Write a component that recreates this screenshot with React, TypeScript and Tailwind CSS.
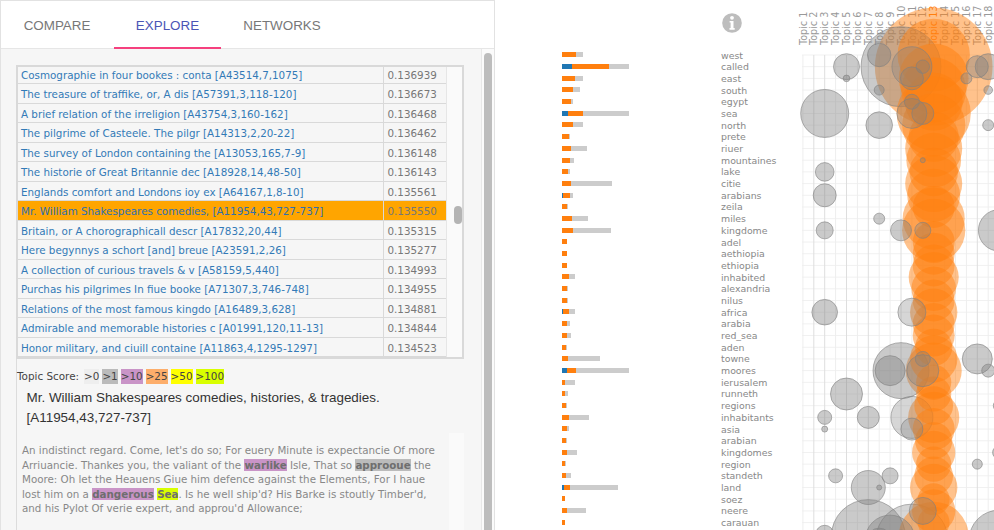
const ROWS: [string, string][] = [
  ["Cosmographie in four bookes : conta [A43514,7,1075]", "0.136939"],
  ["The treasure of traffike, or, A dis [A57391,3,118-120]", "0.136673"],
  ["A brief relation of the irreligion [A43754,3,160-162]", "0.136468"],
  ["The pilgrime of Casteele. The pilgr [A14313,2,20-22]", "0.136462"],
  ["The survey of London containing the [A13053,165,7-9]", "0.136148"],
  ["The historie of Great Britannie dec [A18928,14,48-50]", "0.136143"],
  ["Englands comfort and Londons ioy ex [A64167,1,8-10]", "0.135561"],
  ["Mr. William Shakespeares comedies, [A11954,43,727-737]", "0.135550"],
  ["Britain, or A chorographicall descr [A17832,20,44]", "0.135315"],
  ["Here begynnys a schort [and] breue [A23591,2,26]", "0.135277"],
  ["A collection of curious travels & v [A58159,5,440]", "0.134993"],
  ["Purchas his pilgrimes In fiue booke [A71307,3,746-748]", "0.134955"],
  ["Relations of the most famous kingdo [A16489,3,628]", "0.134881"],
  ["Admirable and memorable histories c [A01991,120,11-13]", "0.134844"],
  ["Honor military, and ciuill containe [A11863,4,1295-1297]", "0.134523"],
];

// word, blue px, orange px, grey-end px
const WORDS: [string, number, number, number][] = [
  ["west", 0, 14, 21], ["called", 10, 37, 67], ["east", 0, 13, 20.7], ["south", 0, 11.3, 18], ["egypt", 0, 9, 10.7],
  ["sea", 6, 14.7, 67], ["north", 0, 10.7, 20.7], ["prete", 0, 6.7, 7], ["riuer", 0, 8.7, 24.7], ["mountaines", 0, 8, 12.3],
  ["lake", 0, 6.3, 8.3], ["citie", 0, 8.7, 50.3], ["arabians", 0.5, 7.5, 11.3], ["zeila", 0, 4.7, 5], ["miles", 0, 10.3, 25.7],
  ["kingdome", 0, 10.7, 48.7], ["adel", 0, 4.7, 4.7], ["aethiopia", 0, 4.7, 4.7], ["ethiopia", 0, 4.7, 4.7], ["inhabited", 0, 6.7, 13],
  ["alexandria", 0, 5.3, 6], ["nilus", 0, 4.7, 5], ["africa", 1, 6, 13.3], ["arabia", 0, 4.7, 7.7], ["red_sea", 0, 4.7, 9],
  ["aden", 0, 3.7, 4], ["towne", 0, 6, 38], ["moores", 5.3, 8.4, 67], ["ierusalem", 0, 3.3, 13], ["runneth", 0, 3.3, 6.3],
  ["regions", 0, 4, 4.3], ["inhabitants", 0, 7, 27], ["asia", 0, 4.7, 7.3], ["arabian", 0, 3.7, 5.3], ["kingdomes", 0, 5, 14.7],
  ["region", 0, 3.3, 3.6], ["standeth", 0, 4, 8.7], ["land", 2, 6, 55.7], ["soez", 0, 2.7, 2.7], ["neere", 0, 5, 24],
  ["carauan", 0, 2.7, 2.7],
];

const colX = (t: number) => 7.9 + (t - 1) * 10.9; // svg starts at x=795
const rowY = (r: number) => 55 + r * 11.69;

// topic, row, radius
const GREY: [number, number, number][] = [
  [3, 5, 24], [3, 12, 11.5], [3, 15, 8.5], [3, 10, 9.3], [3, 22, 12.8], [3, 31, 7], [3, 32, 3], [3, 41, 9],
  [4, 36, 7],
  [5, 1, 13], [5, 2, 3.3], [5, 29, 16],
  [7, 31, 11], [7, 37, 17], [7, 41.2, 37],
  [8, 0, 11.7], [8, 3, 5], [8, 6, 13.3], [8, 14, 5.5], [8, 37, 2.5], [8, 41.5, 12],
  [9, 27, 15], [9, 36, 8], [9, 41.5, 25],
  [10, 1, 40], [10, 15, 10.5], [10, 27, 28], [10, 41.5, 10],
  [11, 1, 20], [11, 2, 11.5], [11, 4, 7.5], [11, 5, 15], [11, 22, 14], [11, 31, 21], [11, 32, 11], [11, 41.5, 36],
  [12, 1, 6.7], [12, 5, 11], [12, 9, 2.5], [12, 15, 8], [12, 26, 7.5], [12, 27, 16], [12, 39, 13.5],
  [16, 2, 5.5],
  [17, 1, 11], [17, 26, 15], [17, 35, 5],
  [18, 1, 13], [18, 3, 4.3], [18, 6, 5.5], [18, 27, 6.5],
  [19, 15, 20.7], [19, 30, 5.8], [19, 34, 6.5], [19, 41.5, 30],
];

const VDARK = new Set([2, 3, 5, 7, 10, 17]);

function Chart() {
  const topics = Array.from({ length: 19 }, (_, i) => i + 1);
  const rows = Array.from({ length: 42 }, (_, i) => i);
  const bubbles: { t: number; r: number; rad: number; orange: boolean }[] = [];
  GREY.forEach(([t, r, rad]) => bubbles.push({ t, r, rad, orange: false }));
  WORDS.forEach((w, r) => bubbles.push({ t: 13, r, rad: 9.67 * Math.sqrt(w[2]), orange: true }));
  bubbles.push({ t: 13, r: 41.2, rad: 35, orange: true });
  bubbles.sort((a, b) => b.rad - a.rad);
  return (
    <svg width="199" height="530" viewBox="0 0 199 530" className="block">
      {rows.map((r) => (
        <line key={r} x1="7" x2="199" y1={rowY(r)} y2={rowY(r)} stroke="#f1f1f1" strokeWidth="1" />
      ))}
      {topics.map((t) => (
        <line key={t} x1={colX(t)} x2={colX(t)} y1="55" y2="530" stroke={VDARK.has(t) ? "#dedede" : "#eeeeee"} strokeWidth="1" />
      ))}
      {topics.map((t) => (
        <text
          key={t}
          transform={`translate(${colX(t) + 3.6} 45) rotate(-90)`}
          fontFamily="'DejaVu Sans', sans-serif"
          fontSize="9.6"
          fill={t === 13 ? "#ff7f0e" : "#999999"}
        >
          {`Topic ${t}`}
        </text>
      ))}
      {bubbles.map((b, i) =>
        b.orange ? (
          <circle key={i} cx={colX(b.t)} cy={rowY(b.r)} r={b.rad} fill="#ff7f0e" fillOpacity="0.48" />
        ) : (
          <circle
            key={i}
            cx={colX(b.t)}
            cy={rowY(b.r)}
            r={b.rad}
            fill="#808080"
            fillOpacity={b.t === 11 || b.t === 12 ? 0.32 : 0.42}
            stroke="#808080"
            strokeOpacity="0.6"
            strokeWidth="1"
          />
        )
      )}
    </svg>
  );
}

function Info() {
  return (
    <svg width="20" height="20" viewBox="0 0 20 20" className="block">
      <circle cx="10" cy="10" r="9.8" fill="#bdbdbd" />
      <circle cx="10" cy="4.8" r="1.9" fill="#ffffff" />
      <path d="M7.6 7.9h3.9v7.2h1.2v1.6H7.5v-1.6h1.1V9.5H7.6z" fill="#ffffff" />
    </svg>
  );
}

function Hl({ c, children }: { c: string; children: string }) {
  return <span className={`font-bold text-[#6e6e6e] ${c}`}>{children}</span>;
}

export default function App() {
  return (
    <div className="flex h-[530px] w-[994px] overflow-hidden bg-white">
      <div className="flex h-[530px] w-[495px] shrink-0 flex-col border-t border-r border-l border-[#e2e2e2] bg-white pt-px">
        <div className="flex h-[47px] shrink-0 items-stretch border-b border-[#e6e6e6] bg-white pt-[2px] font-['Liberation_Sans',sans-serif] text-[13.4px] text-[#777777]">
          <div className="flex w-[112px] items-center justify-center">COMPARE</div>
          <div className="relative ml-[1px] flex w-[107px] items-center justify-center text-[#4a55b5]">
            EXPLORE
            <div className="absolute right-0 bottom-[-1px] left-0 h-[2px] bg-[#f5407e]" />
          </div>
          <div className="flex w-[122px] items-center justify-center">NETWORKS</div>
        </div>
        <div className="flex min-h-0 flex-1 bg-[#f6f6f6]">
          <div className="flex w-[480px] shrink-0 flex-col pt-[16px] pl-[15px] font-['DejaVu_Sans',sans-serif]">
            <div className="flex h-[294px] w-[448px] shrink-0 border-2 border-[#d9d9d9]">
              <div className="w-[428px] shrink-0 overflow-hidden">
                <div className="-mt-[2.2px]">
                  {ROWS.map(([t, v], i) => (
                    <div
                      key={t}
                      className={`flex h-[19.5px] border-b border-[#d9d9d9] text-[10.35px] leading-[20px] ${i === 7 ? "bg-[#ffa500]" : ""}`}
                    >
                      <div className={`w-[366px] shrink-0 overflow-hidden border-r border-[#d9d9d9] pl-[3px] whitespace-nowrap ${i === 7 ? "text-[#2f6fb0]" : "text-[#337ab7]"}`}>{t}</div>
                      <div className="pl-[3.5px] text-[#777777]">{v}</div>
                    </div>
                  ))}
                </div>
              </div>
              <div className="relative flex-1 border-l border-[#e6e6e6] bg-[#fafafa]">
                <div className="absolute top-[139px] left-[7px] h-[18px] w-[8px] rounded-[4px] bg-[#b4b4b4]" />
              </div>
            </div>
            <div className="flex w-[448px] flex-1 flex-col border-l border-[#dcdcdc]">
              <div className="mt-[10px] flex h-[15px] items-center gap-[3px] text-[10.4px] text-[#444444]">
                <span className="mr-[2px]">Topic Score:</span>
                <span className="bg-[#eeeeee]">&gt;0</span>
                <span className="bg-[#bbbbbb]">&gt;1</span>
                <span className="bg-[#c994c7]">&gt;10</span>
                <span className="bg-[#fdae6b]">&gt;25</span>
                <span className="bg-[#ffff00]">&gt;50</span>
                <span className="bg-[#d9ff00]">&gt;100</span>
              </div>
              <div className="mt-[4px] pr-[60px] pl-[9.5px] font-['Liberation_Sans',sans-serif] text-[13.45px] leading-[19.5px] text-[#333333]">
                Mr. William Shakespeares comedies, histories, &amp; tragedies.
                <br />
                [A11954,43,727-737]
              </div>
              <div className="flex flex-1">
                <div className="mt-[6px] w-[432px] pt-[10px] pr-[10px] pl-[5px] text-[10.3px] leading-[14.6px] text-[#888888]">
                  An indistinct regard. Come, let's do so; For euery Minute is expectancie Of more Arriuancie. Thankes you, the valiant of the <Hl c="bg-[#c994c7]">warlike</Hl> Isle, That so <Hl c="bg-[#bbbbbb]">approoue</Hl> the Moore: Oh let the Heauens Giue him defence against the Elements, For I haue lost him on a <Hl c="bg-[#c994c7]">dangerous</Hl> <Hl c="bg-[#d9ff00]">Sea</Hl>. Is he well ship'd? His Barke is stoutly Timber'd, and his Pylot Of verie expert, and approu'd Allowance;
                </div>
                <div className="mt-[6px] flex-1 bg-[#fafafa]" />
              </div>
            </div>
          </div>
          <div className="flex w-[13px] shrink-0 justify-center border-l border-[#e8e8e8] bg-[#fbfbfb] pt-[4px]">
            <div className="h-full w-[8px] rounded-t-[4px] bg-[#bdbdbd]" />
          </div>
        </div>
      </div>

      <div className="ml-[67px] flex h-[530px] flex-1">
        <div className="w-[159px] shrink-0 pt-[49px]">
          {WORDS.map(([w, b, o, e]) => (
            <div key={w} className="flex h-[11.69px] items-center">
              <div className="flex h-[5px]">
                <div className="bg-[#1f77b4]" style={{ width: b }} />
                <div className="bg-[#ff7f0e]" style={{ width: o }} />
                <div className="bg-[#cccccc]" style={{ width: Math.max(0, e - b - o) }} />
              </div>
            </div>
          ))}
        </div>
        <div className="relative w-[74px] shrink-0 pt-[49.5px] font-['DejaVu_Sans',sans-serif] text-[9.4px] leading-[11.69px] text-[#888888]">
          <div className="absolute top-[13px] left-[1px]">
            <Info />
          </div>
          {WORDS.map(([w]) => (
            <div key={w} className="h-[11.69px] whitespace-nowrap">{w}</div>
          ))}
        </div>
        <div className="w-[199px] shrink-0">
          <Chart />
        </div>
      </div>
    </div>
  );
}
